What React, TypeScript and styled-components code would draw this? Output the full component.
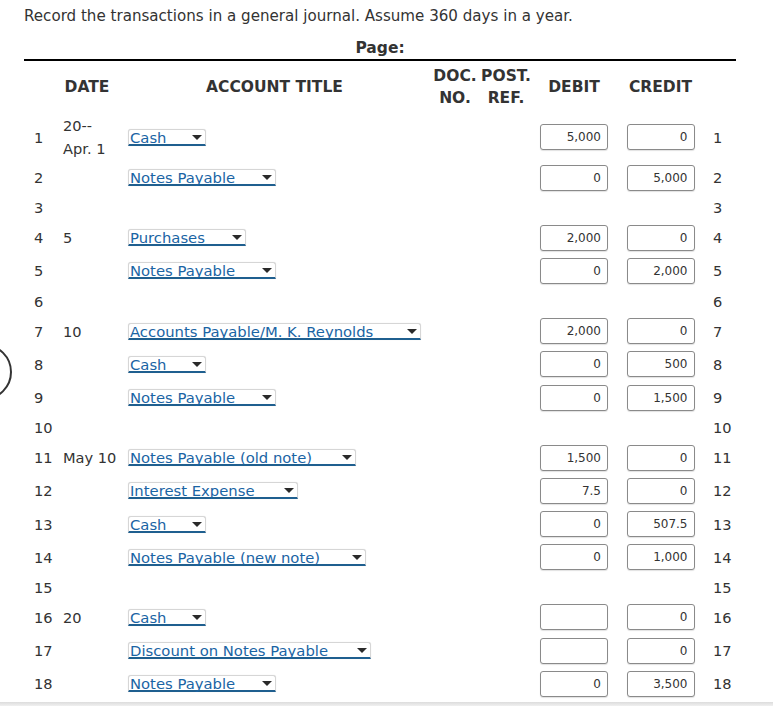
import React from 'react';
import styled, { createGlobalStyle } from 'styled-components';

const GlobalStyle = createGlobalStyle`
  html, body {
    margin: 0;
    padding: 0;
    background: #fff;
  }
  body {
    font-family: "DejaVu Sans", Verdana, sans-serif;
    color: #333;
    overflow: hidden;
  }
`;

interface Entry {
  line: number;
  date?: string[];
  account?: string;
  width?: number; // select width in px
  debit?: string;
  credit?: string;
}

const entries: Entry[] = [
  { line: 1, date: ['20--', 'Apr. 1'], account: 'Cash', width: 78, debit: '5,000', credit: '0' },
  { line: 2, account: 'Notes Payable', width: 148, debit: '0', credit: '5,000' },
  { line: 3 },
  { line: 4, date: ['5'], account: 'Purchases', width: 118, debit: '2,000', credit: '0' },
  { line: 5, account: 'Notes Payable', width: 148, debit: '0', credit: '2,000' },
  { line: 6 },
  { line: 7, date: ['10'], account: 'Accounts Payable/M. K. Reynolds', width: 293, debit: '2,000', credit: '0' },
  { line: 8, account: 'Cash', width: 78, debit: '0', credit: '500' },
  { line: 9, account: 'Notes Payable', width: 148, debit: '0', credit: '1,500' },
  { line: 10 },
  { line: 11, date: ['May 10'], account: 'Notes Payable (old note)', width: 228, debit: '1,500', credit: '0' },
  { line: 12, account: 'Interest Expense', width: 170, debit: '7.5', credit: '0' },
  { line: 13, account: 'Cash', width: 78, debit: '0', credit: '507.5' },
  { line: 14, account: 'Notes Payable (new note)', width: 238, debit: '0', credit: '1,000' },
  { line: 15 },
  { line: 16, date: ['20'], account: 'Cash', width: 78, debit: '', credit: '0' },
  { line: 17, account: 'Discount on Notes Payable', width: 243, debit: '', credit: '0' },
  { line: 18, account: 'Notes Payable', width: 148, debit: '0', credit: '3,500' },
];

const Page = styled.div`
  position: relative;
  padding: 6px 37px 0 24px;
`;

const Intro = styled.p`
  margin: 0;
  font-size: 15.1px;
  line-height: 20px;
`;

const PageLabel = styled.div`
  width: 712px;
  margin-top: 13px;
  text-align: center;
  font-size: 15.5px;
  font-weight: bold;
  line-height: 18px;
`;

const Journal = styled.table`
  margin-top: 2px;
  width: 712px;
  table-layout: fixed;
  border-collapse: collapse;
  border-top: 2px solid #000;
  font-size: 14.6px;
`;

const HeadRow = styled.tr`
  height: 53px;
`;

const HeadCell = styled.th<{ shift?: number }>`
  padding: 0 ${(p) => p.shift || 0}px 0 0;
  font-size: 15.5px;
  font-weight: bold;
  line-height: 22px;
  text-align: center;
  vertical-align: middle;
`;

const Row = styled.tr<{ kind: 'first' | 'filled' | 'empty' }>`
  height: ${(p) => (p.kind === 'first' ? '48px' : p.kind === 'filled' ? '33.2px' : '27px')};
`;

const Cell = styled.td<{ pad?: number }>`
  padding: 0 0 0 ${(p) => p.pad || 0}px;
  text-align: left;
  vertical-align: middle;
  line-height: 23px;
  white-space: nowrap;
`;

const AccountSelect = styled.div<{ w: number }>`
  position: relative;
  box-sizing: border-box;
  width: ${(p) => p.w}px;
  height: 17px;
  padding-left: 1px;
  background: #fff;
  border: 1px solid #d6d6d6;
  border-bottom: 2px solid #1f5f8f;
  border-radius: 3px 3px 0 0;
  box-shadow: 0 0 1px rgba(0, 0, 0, 0.15);
  color: #1a64a4;
  font-size: 14.8px;
  line-height: 15px;
  &::after {
    content: '';
    position: absolute;
    right: 3px;
    top: 5px;
    border-left: 5px solid transparent;
    border-right: 5px solid transparent;
    border-top: 5px solid #2a2a2a;
  }
`;

const Amount = styled.input`
  display: block;
  box-sizing: border-box;
  width: 68px;
  height: 26px;
  margin: 0 auto;
  padding: 0 6px 0 4px;
  border: 1px solid #8a8a8a;
  border-radius: 3px;
  box-shadow: 0 1px 1px rgba(0, 0, 0, 0.12);
  background: #fff;
  color: #333;
  font-family: "DejaVu Sans", Verdana, sans-serif;
  font-size: 12px;
  text-align: right;
  outline: none;
`;

const HelpRing = styled.div`
  position: absolute;
  left: -44px;
  top: 344px;
  box-sizing: border-box;
  width: 56px;
  height: 56px;
  border: 2.5px solid #333;
  border-radius: 50%;
`;

const BottomEdge = styled.div`
  position: fixed;
  left: 0;
  right: 0;
  bottom: 0;
  height: 4px;
  background: linear-gradient(#dcdcdc, #f0f0f0);
`;

const App: React.FC = () => (
  <>
    <GlobalStyle />
    <Page>
      <Intro>Record the transactions in a general journal. Assume 360 days in a year.</Intro>
      <PageLabel>Page:</PageLabel>
      <Journal>
        <colgroup>
          <col style={{ width: 39 }} />
          <col style={{ width: 63 }} />
          <col style={{ width: 304 }} />
          <col style={{ width: 50 }} />
          <col style={{ width: 52 }} />
          <col style={{ width: 84 }} />
          <col style={{ width: 89 }} />
          <col style={{ width: 31 }} />
        </colgroup>
        <thead>
          <HeadRow>
            <HeadCell />
            <HeadCell shift={15}>DATE</HeadCell>
            <HeadCell shift={7}>ACCOUNT TITLE</HeadCell>
            <HeadCell>
              DOC.
              <br />
              NO.
            </HeadCell>
            <HeadCell>
              POST.
              <br />
              REF.
            </HeadCell>
            <HeadCell>DEBIT</HeadCell>
            <HeadCell>CREDIT</HeadCell>
            <HeadCell />
          </HeadRow>
        </thead>
        <tbody>
          {entries.map((e) => (
            <Row key={e.line} kind={e.line === 1 ? 'first' : e.account ? 'filled' : 'empty'}>
              <Cell pad={10}>{e.line}</Cell>
              <Cell>
                {e.date?.map((d, i) => (
                  <div key={i}>{d}</div>
                ))}
              </Cell>
              <Cell pad={2}>{e.account && <AccountSelect w={e.width || 100}>{e.account}</AccountSelect>}</Cell>
              <Cell />
              <Cell />
              <Cell>{e.account && <Amount readOnly value={e.debit} />}</Cell>
              <Cell>{e.account && <Amount readOnly value={e.credit} />}</Cell>
              <Cell pad={8}>{e.line}</Cell>
            </Row>
          ))}
        </tbody>
      </Journal>
      <HelpRing />
    </Page>
    <BottomEdge />
  </>
);

export default App;
